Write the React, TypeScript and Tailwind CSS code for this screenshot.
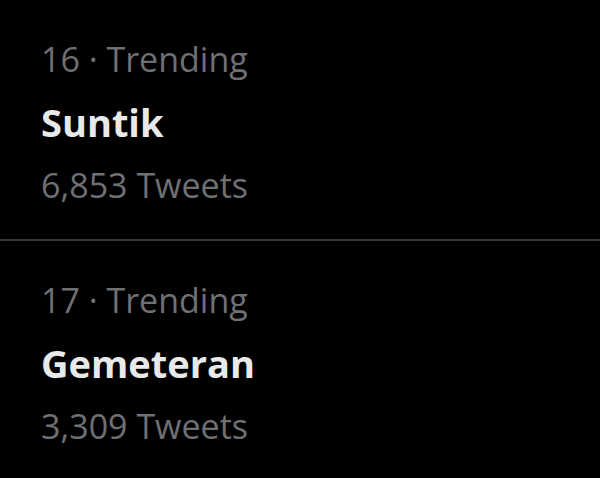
export default function App() {
  const items = [
    { rank: 16, name: "Suntik", count: "6,853" },
    { rank: 17, name: "Gemeteran", count: "3,309" },
  ];
  return (
    <div className="w-[600px] h-[478px] bg-black overflow-hidden" style={{ fontFamily: '"Open Sans", "Noto Sans", sans-serif' }}>
      {items.map((it, i) => (
        <div key={it.rank} className={`pl-[41px] pt-[28px] ${i === 0 ? "h-[241px] border-b-2 border-[#36383a]" : ""}`}>
          <div className="text-[34px] leading-[63px] text-[#6f7073]">{it.rank} · Trending</div>
          <div className="text-[38px] leading-[63px] font-bold text-[#e7e9ea]">{it.name}</div>
          <div className="text-[34px] leading-[63px] text-[#6f7073]">{it.count} Tweets</div>
        </div>
      ))}
    </div>
  );
}
